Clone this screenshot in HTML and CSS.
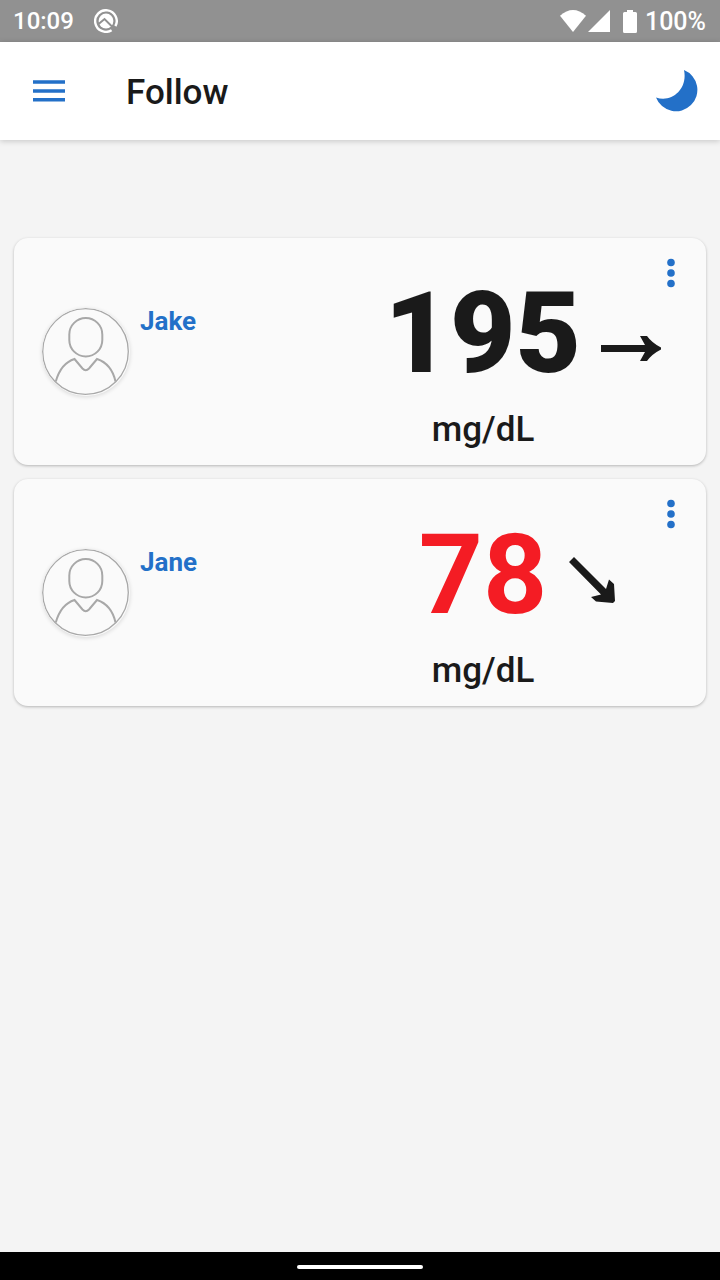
FILE: index.html
```html
<!DOCTYPE html>
<html lang="en">
<head>
<meta charset="utf-8">
<meta name="viewport" content="width=device-width, initial-scale=1">
<title>Follow</title>
<link rel="stylesheet" href="styles.css">
</head>
<body>
<div class="status-bar">
  <span class="clock">10:09</span>
  <svg class="status-app" viewBox="0 0 24 24" width="24" height="24" aria-hidden="true">
    <path d="M17.600 21.200A10.800 10.800 0 1 1 21.400 17.200" fill="none" stroke="#fff" stroke-width="2.400"/>
    <circle cx="12" cy="12" r="7.400" fill="#fff"/>
    <path d="M4 15.500L10.500 10L21 20.500" fill="none" stroke="#919191" stroke-width="2"/>
  </svg>
  <svg class="status-wifi" viewBox="0 0 26 22" width="26" height="22" aria-hidden="true"><path d="M0 5.800Q13-5.600 26 5.800L13 22Z" fill="#fff"/></svg>
  <svg class="status-signal" viewBox="0 0 22 22" width="22" height="22" aria-hidden="true"><path d="M22 0V22H0Z" fill="#fff"/></svg>
  <svg class="status-battery" viewBox="0 0 14 23" width="14" height="23" aria-hidden="true"><path d="M4 0H10V2H12.500Q14 2 14 3.500V21.500Q14 23 12.500 23H1.500Q0 23 0 21.500V3.500Q0 2 1.500 2H4Z" fill="#fff"/></svg>
  <span class="battery-level">100%</span>
</div>

<header class="app-bar">
  <button class="icon-button" type="button" aria-label="Menu">
    <svg viewBox="0 0 32 22" width="32" height="22"><path d="M0 2H32M0 11H32M0 19.700H32" stroke="#2370c8" stroke-width="3.500"/></svg>
  </button>
  <h1 class="title">Follow</h1>
  <button class="icon-button" type="button" aria-label="Night mode">
    <svg viewBox="0 0 42 42" width="42" height="42"><path d="M28 0A21.400 21.400 0 1 1 0 27.500C16 33 32 19 28 0Z" fill="#2370c8"/></svg>
  </button>
</header>

<main class="people">
  <article class="card">
    <svg class="avatar" viewBox="0 0 88 88" width="88" height="88" aria-hidden="true">
      <circle cx="43.500" cy="43.500" r="42.800" fill="#fafafa" stroke="#a8a8a8" stroke-width="1.300"/>
      <rect x="27.300" y="10" width="33" height="38.500" rx="16.500" fill="none" stroke="#a8a8a8" stroke-width="2"/>
      <path d="M13.800 73.500C17 62 23 54 32.500 51L40.500 60.500Q43.700 64 47 60.500L55 51C64 54 71 62 73.500 73.500" fill="none" stroke="#a8a8a8" stroke-width="2"/>
    </svg>
    <h2 class="name">Jake</h2>
    <div class="reading">
      <span class="value value-normal">195</span>
      <svg class="arrow arrow-steady" viewBox="0 0 62 28" width="62" height="28" role="img" aria-label="Steady"><path d="M0 10H44L39 1H46Q51 8 60 12.500V14.500Q51 19 46 26H39L44 17H0Z" fill="#1a1a1a"/></svg>
      <span class="unit">mg/dL</span>
    </div>
    <button class="more" type="button" aria-label="Options for Jake">
      <svg viewBox="0 0 8 30" width="8" height="30" fill="#2370c8"><circle cx="4" cy="4.500" r="3.800"/><circle cx="4" cy="15" r="3.800"/><circle cx="4" cy="25.500" r="3.800"/></svg>
    </button>
  </article>

  <article class="card">
    <svg class="avatar" viewBox="0 0 88 88" width="88" height="88" aria-hidden="true">
      <circle cx="43.500" cy="43.500" r="42.800" fill="#fafafa" stroke="#a8a8a8" stroke-width="1.300"/>
      <rect x="27.300" y="10" width="33" height="38.500" rx="16.500" fill="none" stroke="#a8a8a8" stroke-width="2"/>
      <path d="M13.800 73.500C17 62 23 54 32.500 51L40.500 60.500Q43.700 64 47 60.500L55 51C64 54 71 62 73.500 73.500" fill="none" stroke="#a8a8a8" stroke-width="2"/>
    </svg>
    <h2 class="name">Jane</h2>
    <div class="reading">
      <span class="value value-low">78</span>
      <svg class="arrow arrow-falling" viewBox="0 0 48 48" width="48" height="48" role="img" aria-label="Falling"><path d="M0 5L5 0L37 32L40 22.500L45 27L46 44L44 46L27 44.500L22 40L32 37.500Z" fill="#1a1a1a"/></svg>
      <span class="unit">mg/dL</span>
    </div>
    <button class="more" type="button" aria-label="Options for Jane">
      <svg viewBox="0 0 8 30" width="8" height="30" fill="#2370c8"><circle cx="4" cy="4.500" r="3.800"/><circle cx="4" cy="15" r="3.800"/><circle cx="4" cy="25.500" r="3.800"/></svg>
    </button>
  </article>
</main>

<nav class="gesture-bar" aria-label="System navigation"><span class="gesture-handle"></span></nav>
</body>
</html>
```
FILE: styles.css
```css
* { box-sizing: border-box; }
body {
  margin: 0;
  min-height: 100vh;
  display: flex;
  flex-direction: column;
  background: #f4f4f4;
  color: #1a1a1a;
  font-family: Roboto, "Liberation Sans", sans-serif;
}
svg { display: block; flex: none; }
button { border: 0; padding: 0; background: none; cursor: pointer; }
h1, h2 { margin: 0; }

.status-bar {
  display: flex;
  align-items: center;
  height: 42px;
  padding: 0 14px 0 13px;
  background: #919191;
  color: #fff;
  font-size: 24px;
  font-weight: 500;
}
.status-app { margin-left: 20px; }
.status-wifi { margin-left: auto; }
.status-signal { margin-left: 2px; }
.status-battery { margin: 0 8px 0 13px; }
.battery-level { font-size: 25px; }

.app-bar {
  display: flex;
  align-items: center;
  height: 98px;
  padding: 0 22px 0 33px;
  background: #fff;
  box-shadow: 0 1px 6px rgba(0, 0, 0, 0.2);
}
.title { flex: 1; margin-left: 61px; padding-top: 4px; font-size: 35px; font-weight: 500; line-height: 44px; }

.people {
  flex: 1;
  display: flex;
  flex-direction: column;
  gap: 14px;
  padding: 98px 14px 14px;
}
.card {
  display: grid;
  grid-template-columns: 88px 1fr 360px 43px;
  min-height: 227px;
  padding-left: 28px;
  border-radius: 14px;
  background: #fafafa;
  box-shadow: 0 1px 3px rgba(0, 0, 0, 0.26);
}
.avatar { align-self: center; border-radius: 50%; box-shadow: 0 1px 4px rgba(0, 0, 0, 0.14); }
.name { margin: 66px 0 0 10px; color: #2370c8; font-size: 26px; font-weight: 700; line-height: 34px; }

.reading {
  display: grid;
  grid-template-columns: 1fr auto 1fr;
  grid-template-rows: 120px auto;
  row-gap: 14px;
  align-content: start;
  align-items: center;
  padding-top: 36px;
}
.value { grid-column: 2; font-size: 113px; line-height: 120px; }
.value-normal { font-weight: 900; }
.value-low { color: #f41c24; font-size: 112px; font-weight: 700; }
.arrow { grid-column: 3; }
.arrow-steady { margin: 30px 0 0 20px; }
.arrow-falling { margin: 12px 0 0 22px; }
.unit { grid-column: 1 / -1; font-size: 35px; font-weight: 500; line-height: 44px; text-align: center; }
.more { display: flex; justify-content: center; align-self: start; width: 16px; margin-top: 20px; }

.gesture-bar { display: flex; align-items: center; justify-content: center; height: 28px; background: #000; }
.gesture-handle { width: 126px; height: 4px; margin-top: 2px; border-radius: 2px; background: #fff; }
```
